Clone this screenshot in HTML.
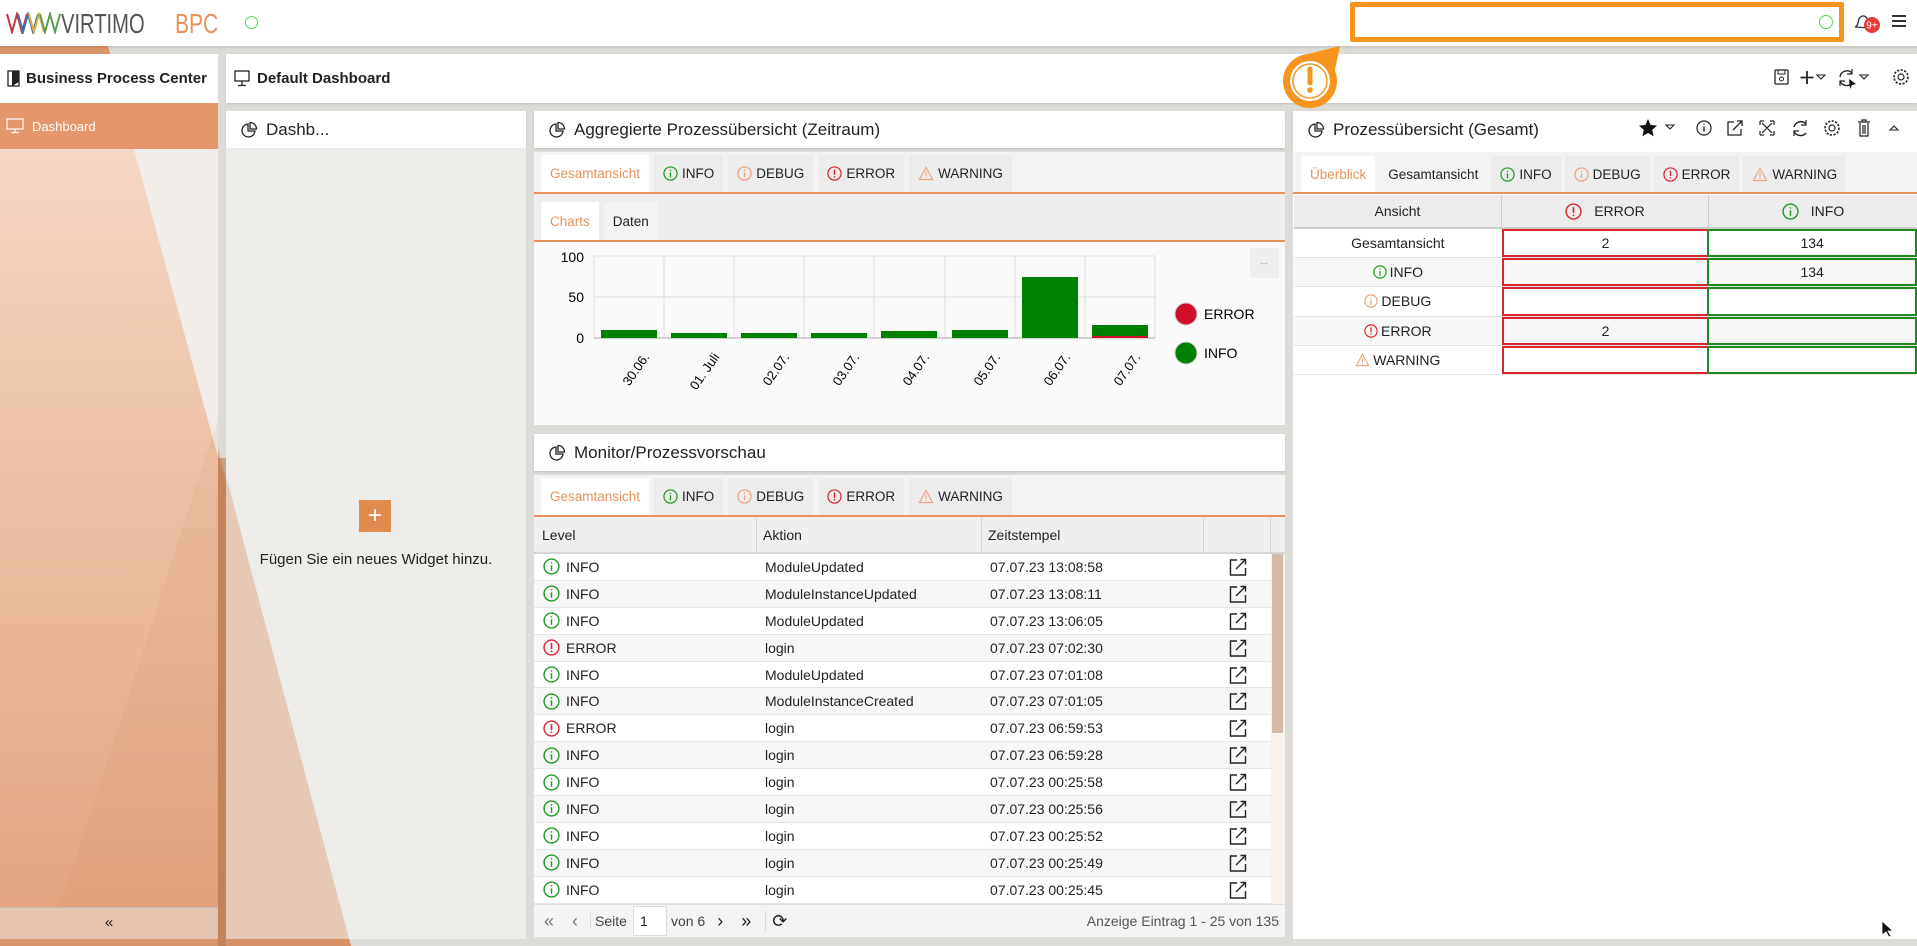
<!DOCTYPE html>
<html><head><meta charset="utf-8">
<style>
*{box-sizing:border-box;margin:0;padding:0}
body{width:1917px;height:946px;overflow:hidden;position:relative;background:#dcdbd8;font-family:"Liberation Sans",sans-serif;color:#222;font-size:14px}
.a{position:absolute}
.w{background:#fff}
.hdr{position:absolute;background:#fff;display:flex;align-items:center;font-size:17px;box-shadow:0 1px 2px rgba(0,0,0,.12)}
.tabs{position:absolute;display:flex;gap:5px;border-bottom:2px solid #e8925d;background:#f3f3f3;padding-left:7px;align-items:flex-end}
.tab{height:37px;background:#ececec;display:flex;align-items:center;padding:0 9px;font-size:13.5px;gap:4px}
.tab.on{background:#fff;color:#e8925d}
.row{display:flex;height:26.9px;align-items:center;border-bottom:1px solid #e6e6e6;font-size:14px}
.row:nth-child(even){background:#f7f7f7}
.row:nth-child(odd){background:#fff}
.c1{width:223px;padding-left:9px;display:flex;align-items:center;gap:6px}
.c2{width:225px;padding-left:8px}
.c3{width:222px;padding-left:8px}
.c4{width:67px;display:flex;justify-content:center}
.rt{display:flex;height:29.2px;border-bottom:1px solid #e4e4e4;font-size:14px;align-items:stretch}
.rt>div{display:flex;align-items:center;justify-content:center;gap:3px}
.rt .x1{width:208px}
.rt .x2{width:207px;border:2px solid #d8262e;border-right-width:1px}
.rt .x3{width:209px;border:2px solid #1f8a1f;border-left-width:1px}
</style></head><body>
<svg width="0" height="0" style="position:absolute">
<defs>
<symbol id="inf" viewBox="0 0 16 16"><circle cx="8" cy="8" r="7" fill="none" stroke="#1e9a22" stroke-width="1.3"/><path d="M8 6.8v5.2M8 4v1.3" stroke="#1e9a22" stroke-width="1.4"/></symbol>
<symbol id="dbg" viewBox="0 0 16 16"><circle cx="8" cy="8" r="7" fill="none" stroke="#eda07a" stroke-width="1.3"/><path d="M8 6.8v5.2M8 4v1.3" stroke="#eda07a" stroke-width="1.4"/></symbol>
<symbol id="err" viewBox="0 0 16 16"><circle cx="8" cy="8" r="7" fill="none" stroke="#d9232d" stroke-width="1.3"/><path d="M8 3.8v5.6M8 10.8v1.4" stroke="#d9232d" stroke-width="1.5"/></symbol>
<symbol id="wrn" viewBox="0 0 16 16"><path d="M8 1.5L15 14.5H1z" fill="none" stroke="#eda07a" stroke-width="1.2"/><path d="M8 6v4.5M8 11.8v1.2" stroke="#eda07a" stroke-width="1.2"/></symbol>
<symbol id="ext" viewBox="0 0 20 20"><path d="M9 3H2.5v15h15V11" fill="none" stroke="#222" stroke-width="1.4"/><path d="M8 12L17.5 2.5M12.5 2.5h5v5" fill="none" stroke="#222" stroke-width="1.4"/></symbol>
<symbol id="pie" viewBox="0 0 18 18"><path d="M8 3a6.5 6.5 0 1 0 7 7H8z" fill="none" stroke="#222" stroke-width="1.3"/><path d="M10 1.5a6.5 6.5 0 0 1 6.5 6.5H10z" fill="none" stroke="#222" stroke-width="1.3"/></symbol>
</defs></svg>

<svg class="a" style="left:0;top:46px" width="1917" height="900">
<rect x="0" y="0" width="1917" height="900" fill="#dcdbd8"/>
<polygon points="0,0 108,0 351,900 0,900" fill="#d88a58" opacity=".85"/>
</svg>

<div class="a w" style="left:0;top:0;width:1917px;height:46px;box-shadow:0 1px 3px rgba(0,0,0,.15)"></div>
<svg class="a" style="left:6px;top:12px" width="56" height="22">
<path d="M1 2l5 18 5-18 5 18 5-18" fill="none" stroke="#c7343a" stroke-width="2"/>
<path d="M12 2l5 18 5-18 5 18 5-18" fill="none" stroke="#3e6fae" stroke-width="2"/>
<path d="M23 2l5 18 5-18 5 18" fill="none" stroke="#e3b43a" stroke-width="2"/>
<path d="M34 2l5 18 5-18 5 18 5-18" fill="none" stroke="#5d9c55" stroke-width="2"/>
</svg>
<div class="a" style="left:61px;top:8px;font-size:28px;color:#555;transform:scaleX(.72);transform-origin:left;letter-spacing:0">VIRTIMO</div>
<div class="a" style="left:175px;top:8px;font-size:28px;color:#e8925d;transform:scaleX(.75);transform-origin:left">BPC</div>
<div class="a" style="left:245px;top:16px;width:13px;height:13px;border:1.5px solid #5ccf5c;border-radius:50%"></div>
<div class="a" style="left:1350px;top:2px;width:494px;height:40px;border:5px solid #f7941d;border-radius:2px;background:#fff"></div>
<div class="a" style="left:1819px;top:15px;width:14px;height:14px;border:1.5px solid #5ccf5c;border-radius:50%"></div>
<svg class="a" style="left:1852px;top:13px" width="30" height="22"><path d="M3 14c3-1 3-5 4-8s5-4 7-2 1 5 2 8l2 3z" fill="none" stroke="#333" stroke-width="1.3"/><circle cx="20" cy="12" r="8" fill="#e53b3b"/><text x="20" y="15.5" font-size="10" fill="#fff" text-anchor="middle" font-family="Liberation Sans">9+</text></svg>
<div class="a" style="left:1892px;top:15px;width:14px;height:2px;background:#333;box-shadow:0 5px 0 #333,0 10px 0 #333"></div>

<div class="a" style="left:0;top:54px;width:218px;height:49px;background:#fff;display:flex;align-items:center;font-weight:bold;font-size:15px;gap:6px;padding-left:7px"><svg width="13" height="17"><rect x="1" y="1" width="11" height="15" fill="none" stroke="#222" stroke-width="1.3"/><path d="M5 1v15l7-4V1z" fill="#222"/></svg>Business Process Center</div>
<div class="a" style="left:0;top:103px;width:218px;height:46px;background:#e5966a;color:#fff;display:flex;align-items:center;gap:8px;padding-left:6px;font-size:13px"><svg width="18" height="16"><rect x="1" y="1" width="16" height="10" fill="none" stroke="#fff" stroke-width="1.2"/><path d="M9 11v3M5 14.5h8" stroke="#fff" stroke-width="1.2"/></svg>Dashboard</div>
<svg class="a" style="left:0;top:149px" width="218" height="758">
<defs><linearGradient id="sg" x1="0" y1="0" x2="0" y2="1"><stop offset="0" stop-color="#f4d7c5"/><stop offset="1" stop-color="#e3a47e"/></linearGradient></defs>
<rect width="218" height="758" fill="url(#sg)"/>
<polygon points="134,0 218,0 218,308" fill="#f2ece8"/>
<polygon points="60,758 218,270 218,758" fill="#d88a58" opacity=".12"/>
</svg>
<div class="a" style="left:0;top:907px;width:218px;height:32px;background:#e6c5b0;border-top:1px solid #bbb;text-align:center;line-height:30px;font-size:15px">«</div>

<div class="hdr" style="left:226px;top:54px;width:1691px;height:49px;font-weight:bold;font-size:15px;padding-left:8px;gap:6px"><svg width="17" height="17"><rect x="1" y="1" width="14" height="10" fill="none" stroke="#222" stroke-width="1.3"/><path d="M8 11v4M4 15.5h8" stroke="#222" stroke-width="1.3"/></svg>Default Dashboard</div>
<svg class="a" style="left:1772px;top:67px" width="145" height="24">
<rect x="3" y="3" width="13" height="14" rx="1" fill="none" stroke="#222" stroke-width="1.3"/><rect x="6" y="3" width="7" height="4" fill="none" stroke="#222"/><circle cx="9.5" cy="12" r="2" fill="none" stroke="#222"/>
<path d="M35 4v13M28.5 10.5h13" stroke="#222" stroke-width="1.8"/><path d="M45 8h8l-4 4z" fill="none" stroke="#222" stroke-width="1.1"/>
<path d="M80 6a7 7 0 0 0-12 4M68 14a7 7 0 0 0 12 2" fill="none" stroke="#222" stroke-width="1.4"/><path d="M80 2v5h-5M68 19v-5h5" fill="none" stroke="#222" stroke-width="1.2"/><path d="M77 12l7 5-4 1-2 4z" fill="#111"/>
<path d="M88 8h8l-4 4z" fill="none" stroke="#222" stroke-width="1.1"/>
<circle cx="129" cy="10" r="3" fill="none" stroke="#222" stroke-width="1.2"/><circle cx="129" cy="10" r="7" fill="none" stroke="#222" stroke-width="1.6" stroke-dasharray="2.2 1.4"/>
</svg>

<svg class="a" style="left:1280px;top:44px" width="70" height="70">
<path d="M20 12L60 2 52 40z" fill="#f7941d"/>
<circle cx="30" cy="37" r="27" fill="#f7941d"/>
<circle cx="30" cy="37" r="20" fill="#fff"/>
<circle cx="30" cy="37" r="17" fill="none" stroke="#f7941d" stroke-width="1.5"/>
<path d="M30 25v14" stroke="#f7941d" stroke-width="5" stroke-linecap="round"/><circle cx="30" cy="46" r="2.8" fill="#f7941d"/>
</svg>

<div class="hdr" style="left:226px;top:111px;width:300px;height:37px;padding-left:14px;gap:8px"><svg width="18" height="18"><use href="#pie"/></svg>Dashb...</div>
<div class="a" style="left:226px;top:148px;width:300px;height:791px;background:#edece9"></div>
<svg class="a" style="left:218px;top:148px" width="320" height="798"><polygon points="0,298 0,798 133,798" fill="#d88a58" opacity=".35"/><polygon points="0,310 8,310 8,798 0,798" fill="#b97a52" opacity=".6"/></svg>
<div class="a" style="left:359px;top:500px;width:32px;height:32px;background:#e08a50;color:#fff;font-size:24px;text-align:center;line-height:31px">+</div>
<div class="a" style="left:226px;top:551px;width:300px;text-align:center;font-size:15px">Fügen Sie ein neues Widget hinzu.</div>

<div class="hdr" style="left:534px;top:111px;width:751px;height:37px;padding-left:14px;gap:8px"><svg width="18" height="18"><use href="#pie"/></svg>Aggregierte Prozessübersicht (Zeitraum)</div>
<div class="tabs" style="left:534px;top:152px;width:751px;height:42px">
<div class="tab on">Gesamtansicht</div>
<div class="tab"><svg width="15" height="15"><use href="#inf"/></svg>INFO</div>
<div class="tab"><svg width="15" height="15"><use href="#dbg"/></svg>DEBUG</div>
<div class="tab"><svg width="15" height="15"><use href="#err"/></svg>ERROR</div>
<div class="tab"><svg width="16" height="15"><use href="#wrn"/></svg>WARNING</div>
</div>
<div class="tabs" style="left:534px;top:194px;width:751px;height:48px;background:#eeeeee">
<div class="tab on" style="height:38px">Charts</div>
<div class="tab" style="height:38px;background:#f4f4f4;color:#222">Daten</div>
</div>
<div class="a" style="left:534px;top:242px;width:751px;height:183px;background:#fafafa"></div>
<svg class="a" style="left:534px;top:242px" width="751" height="183" font-family="Liberation Sans" font-size="14">
<g stroke="#ddd" stroke-width="1">
<line x1="60" y1="14" x2="621" y2="14"/><line x1="60" y1="55" x2="621" y2="55"/>
<line x1="60" y1="14" x2="60" y2="96"/><line x1="130" y1="14" x2="130" y2="96"/><line x1="200" y1="14" x2="200" y2="96"/><line x1="270" y1="14" x2="270" y2="96"/><line x1="340" y1="14" x2="340" y2="96"/><line x1="411" y1="14" x2="411" y2="96"/><line x1="481" y1="14" x2="481" y2="96"/><line x1="551" y1="14" x2="551" y2="96"/><line x1="621" y1="14" x2="621" y2="96"/>
</g>
<line x1="60" y1="96" x2="621" y2="96" stroke="#aaa"/>
<text x="50" y="20" text-anchor="end">100</text><text x="50" y="60" text-anchor="end">50</text><text x="50" y="101" text-anchor="end">0</text>
<g fill="#008000">
<rect x="67" y="88" width="56" height="8"/><rect x="137" y="91" width="56" height="5"/><rect x="207" y="91" width="56" height="5"/><rect x="277" y="91" width="56" height="5"/><rect x="347" y="89" width="56" height="7"/><rect x="418" y="88" width="56" height="8"/><rect x="488" y="35" width="56" height="61"/><rect x="558" y="83" width="56" height="13"/>
</g>
<rect x="558" y="94" width="56" height="2" fill="#d0102a"/>
<g font-size="13" text-anchor="end">
<text transform="translate(116,115) rotate(-55)">30.06.</text>
<text transform="translate(186,115) rotate(-55)">01. Juli</text>
<text transform="translate(256,115) rotate(-55)">02.07.</text>
<text transform="translate(326,115) rotate(-55)">03.07.</text>
<text transform="translate(396,115) rotate(-55)">04.07.</text>
<text transform="translate(467,115) rotate(-55)">05.07.</text>
<text transform="translate(537,115) rotate(-55)">06.07.</text>
<text transform="translate(607,115) rotate(-55)">07.07.</text>
</g>
<circle cx="652" cy="72" r="11" fill="#d0102a" stroke="#ccc"/><text x="670" y="77">ERROR</text>
<circle cx="652" cy="111" r="11" fill="#008000" stroke="#ccc"/><text x="670" y="116">INFO</text>
<rect x="716" y="6" width="29" height="30" fill="#efefef"/><text x="730" y="22" font-size="9" fill="#888" text-anchor="middle">...</text>
</svg>

<div class="hdr" style="left:534px;top:434px;width:751px;height:37px;padding-left:14px;gap:8px"><svg width="18" height="18"><use href="#pie"/></svg>Monitor/Prozessvorschau</div>
<div class="tabs" style="left:534px;top:475px;width:751px;height:42px">
<div class="tab on">Gesamtansicht</div>
<div class="tab"><svg width="15" height="15"><use href="#inf"/></svg>INFO</div>
<div class="tab"><svg width="15" height="15"><use href="#dbg"/></svg>DEBUG</div>
<div class="tab"><svg width="15" height="15"><use href="#err"/></svg>ERROR</div>
<div class="tab"><svg width="16" height="15"><use href="#wrn"/></svg>WARNING</div>
</div>
<div class="a" style="left:534px;top:517px;width:751px;height:37px;background:#efefef;border-bottom:2px solid #d5d5d5;display:flex;align-items:center;font-size:14px">
<div style="width:223px;padding-left:8px;border-right:1px solid #d5d5d5;height:100%;display:flex;align-items:center">Level</div>
<div style="width:225px;padding-left:6px;border-right:1px solid #d5d5d5;height:100%;display:flex;align-items:center">Aktion</div>
<div style="width:222px;padding-left:6px;border-right:1px solid #d5d5d5;height:100%;display:flex;align-items:center">Zeitstempel</div>
<div style="width:67px;border-right:1px solid #d5d5d5;height:100%"></div>
</div>
<div class="a" style="left:534px;top:554px;width:737px">
<div class="row"><div class="c1"><svg width="17" height="17"><use href="#inf"/></svg>INFO</div><div class="c2">ModuleUpdated</div><div class="c3">07.07.23 13:08:58</div><div class="c4"><svg width="20" height="20"><use href="#ext"/></svg></div></div>
<div class="row"><div class="c1"><svg width="17" height="17"><use href="#inf"/></svg>INFO</div><div class="c2">ModuleInstanceUpdated</div><div class="c3">07.07.23 13:08:11</div><div class="c4"><svg width="20" height="20"><use href="#ext"/></svg></div></div>
<div class="row"><div class="c1"><svg width="17" height="17"><use href="#inf"/></svg>INFO</div><div class="c2">ModuleUpdated</div><div class="c3">07.07.23 13:06:05</div><div class="c4"><svg width="20" height="20"><use href="#ext"/></svg></div></div>
<div class="row"><div class="c1"><svg width="17" height="17"><use href="#err"/></svg>ERROR</div><div class="c2">login</div><div class="c3">07.07.23 07:02:30</div><div class="c4"><svg width="20" height="20"><use href="#ext"/></svg></div></div>
<div class="row"><div class="c1"><svg width="17" height="17"><use href="#inf"/></svg>INFO</div><div class="c2">ModuleUpdated</div><div class="c3">07.07.23 07:01:08</div><div class="c4"><svg width="20" height="20"><use href="#ext"/></svg></div></div>
<div class="row"><div class="c1"><svg width="17" height="17"><use href="#inf"/></svg>INFO</div><div class="c2">ModuleInstanceCreated</div><div class="c3">07.07.23 07:01:05</div><div class="c4"><svg width="20" height="20"><use href="#ext"/></svg></div></div>
<div class="row"><div class="c1"><svg width="17" height="17"><use href="#err"/></svg>ERROR</div><div class="c2">login</div><div class="c3">07.07.23 06:59:53</div><div class="c4"><svg width="20" height="20"><use href="#ext"/></svg></div></div>
<div class="row"><div class="c1"><svg width="17" height="17"><use href="#inf"/></svg>INFO</div><div class="c2">login</div><div class="c3">07.07.23 06:59:28</div><div class="c4"><svg width="20" height="20"><use href="#ext"/></svg></div></div>
<div class="row"><div class="c1"><svg width="17" height="17"><use href="#inf"/></svg>INFO</div><div class="c2">login</div><div class="c3">07.07.23 00:25:58</div><div class="c4"><svg width="20" height="20"><use href="#ext"/></svg></div></div>
<div class="row"><div class="c1"><svg width="17" height="17"><use href="#inf"/></svg>INFO</div><div class="c2">login</div><div class="c3">07.07.23 00:25:56</div><div class="c4"><svg width="20" height="20"><use href="#ext"/></svg></div></div>
<div class="row"><div class="c1"><svg width="17" height="17"><use href="#inf"/></svg>INFO</div><div class="c2">login</div><div class="c3">07.07.23 00:25:52</div><div class="c4"><svg width="20" height="20"><use href="#ext"/></svg></div></div>
<div class="row"><div class="c1"><svg width="17" height="17"><use href="#inf"/></svg>INFO</div><div class="c2">login</div><div class="c3">07.07.23 00:25:49</div><div class="c4"><svg width="20" height="20"><use href="#ext"/></svg></div></div>
<div class="row"><div class="c1"><svg width="17" height="17"><use href="#inf"/></svg>INFO</div><div class="c2">login</div><div class="c3">07.07.23 00:25:45</div><div class="c4"><svg width="20" height="20"><use href="#ext"/></svg></div></div>
</div>
<div class="a" style="left:1271px;top:554px;width:14px;height:351px;background:#f7f1ed"></div>
<div class="a" style="left:1272px;top:554px;width:11px;height:179px;background:#d3b9a8"></div>
<div class="a" style="left:534px;top:904px;width:751px;height:33px;background:#f4f4f4;border-top:1px solid #ddd;display:flex;align-items:center;font-size:14px;color:#444">
<span style="margin-left:10px;font-size:18px;color:#777">«</span>
<span style="margin-left:18px;font-size:18px;color:#777">‹</span>
<span style="margin-left:12px;border-left:1px solid #ddd;padding-left:4px">Seite</span>
<span style="margin-left:6px;background:#fff;width:34px;height:30px;display:inline-flex;align-items:center;padding-left:6px;border:1px solid #ddd;color:#222">1</span>
<span style="margin-left:4px">von 6</span>
<span style="margin-left:12px;font-size:18px;color:#222">›</span>
<span style="margin-left:18px;font-size:18px;color:#222">»</span>
<span style="margin-left:14px;font-size:18px;color:#222;border-left:1px solid #ddd;padding-left:6px">⟳</span>
<span style="margin-left:auto;margin-right:6px;color:#555">Anzeige Eintrag 1 - 25 von 135</span>
</div>

<div class="hdr" style="left:1293px;top:111px;width:624px;height:37px;padding-left:14px;gap:8px"><svg width="18" height="18"><use href="#pie"/></svg>Prozessübersicht (Gesamt)</div>
<svg class="a" style="left:1638px;top:117px" width="279" height="24">
<path d="M10 2l2.6 6 6.4.6-4.8 4.3 1.4 6.3L10 16l-5.6 3.2 1.4-6.3L1 8.6 7.4 8z" fill="#111"/>
<path d="M28 8h8l-4 4z" fill="none" stroke="#222" stroke-width="1.1"/>
<circle cx="66" cy="11" r="7" fill="none" stroke="#222" stroke-width="1.2"/><path d="M66 9.5v5M66 6.5v1" stroke="#222" stroke-width="1.4"/>
<path d="M96 5h-6v13h13v-6M95 13l9-9M99 4h5v5" fill="none" stroke="#222" stroke-width="1.3"/>
<path d="M122 4h4M122 4v4M136 4h-4M136 4v4M122 18h4M122 18v-4M136 18h-4M136 18v-4M124 6l10 10M134 6l-10 10" fill="none" stroke="#222" stroke-width="1.2"/>
<path d="M168 7a7 7 0 0 0-12 3M156 14a7 7 0 0 0 12 2" fill="none" stroke="#222" stroke-width="1.4"/><path d="M168 3v5h-5M156 19v-5h5" fill="none" stroke="#222" stroke-width="1.2"/>
<circle cx="194" cy="11" r="3" fill="none" stroke="#222" stroke-width="1.2"/><circle cx="194" cy="11" r="7" fill="none" stroke="#222" stroke-width="1.6" stroke-dasharray="2.2 1.4"/>
<path d="M220 5h12M224 5V3h4v2M222 6v13h8V6M225 8v9M227 8v9" fill="none" stroke="#222" stroke-width="1.2"/>
<path d="M252 13l4-4 4 4z" fill="none" stroke="#222" stroke-width="1.1"/>
</svg>
<div class="a" style="left:1293px;top:148px;width:624px;height:791px;background:#fff"></div>
<div class="tabs" style="left:1293px;top:152px;width:624px;height:42px;padding-left:8px;gap:4px">
<div class="tab on" style="height:36px">Überblick</div>
<div class="tab" style="height:36px;background:#f4f4f4">Gesamtansicht</div>
<div class="tab" style="height:36px"><svg width="15" height="15"><use href="#inf"/></svg>INFO</div>
<div class="tab" style="height:36px"><svg width="15" height="15"><use href="#dbg"/></svg>DEBUG</div>
<div class="tab" style="height:36px"><svg width="15" height="15"><use href="#err"/></svg>ERROR</div>
<div class="tab" style="height:36px"><svg width="16" height="15"><use href="#wrn"/></svg>WARNING</div>
</div>
<div class="a" style="left:1294px;top:195px;width:623px;height:34px;background:#ececec;border-bottom:2px solid #ccc;display:flex;font-size:14px">
<div style="width:208px;display:flex;align-items:center;justify-content:center;border-right:1px solid #ccc">Ansicht</div>
<div style="width:207px;display:flex;align-items:center;justify-content:center;gap:12px;border-right:1px solid #ccc"><svg width="17" height="17"><use href="#err"/></svg>ERROR</div>
<div style="width:208px;display:flex;align-items:center;justify-content:center;gap:12px"><svg width="17" height="17"><use href="#inf"/></svg>INFO</div>
</div>
<div class="a" style="left:1294px;top:229px;width:623px">
<div class="rt"><div class="x1">Gesamtansicht</div><div class="x2">2</div><div class="x3">134</div></div>
<div class="rt" style="background:#f7f7f7"><div class="x1"><svg width="14" height="14"><use href="#inf"/></svg>INFO</div><div class="x2"></div><div class="x3">134</div></div>
<div class="rt"><div class="x1"><svg width="14" height="14"><use href="#dbg"/></svg>DEBUG</div><div class="x2"></div><div class="x3"></div></div>
<div class="rt" style="background:#f7f7f7"><div class="x1"><svg width="14" height="14"><use href="#err"/></svg>ERROR</div><div class="x2">2</div><div class="x3"></div></div>
<div class="rt"><div class="x1"><svg width="15" height="14"><use href="#wrn"/></svg>WARNING</div><div class="x2"></div><div class="x3"></div></div>
</div>
<svg class="a" style="left:1880px;top:920px" width="14" height="18"><path d="M2 1v14l4-3 3 5 2-1-3-5h5z" fill="#111" stroke="#fff" stroke-width=".8"/></svg>
</body></html>
